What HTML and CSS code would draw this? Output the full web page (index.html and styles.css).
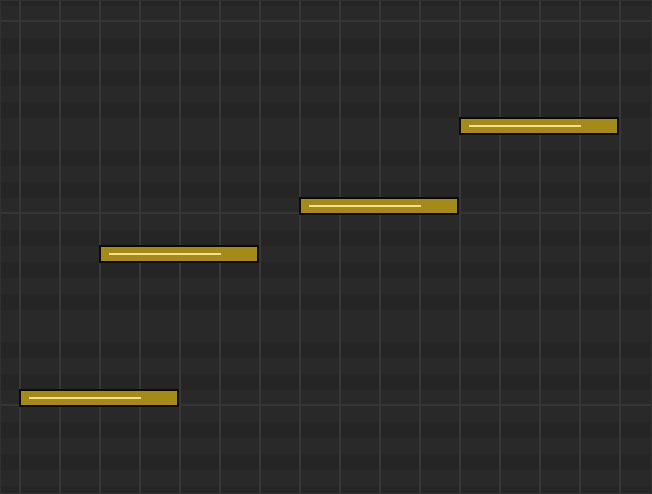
FILE: index.html
```html
<!DOCTYPE html>
<html lang="en">

<head>
    <meta charset="UTF-8">
    <meta name="viewport" content="width=device-width, initial-scale=1.0">
    <title>Piano Roll</title>
    <link rel="stylesheet" href="styles.css">
</head>

<body>
    <div class="roll">
        <div class="note" style="left: 18px; top: 388px;"><span class="velocity"></span></div>
        <div class="note" style="left: 98px; top: 244px;"><span class="velocity"></span></div>
        <div class="note" style="left: 298px; top: 196px;"><span class="velocity"></span></div>
        <div class="note" style="left: 458px; top: 116px;"><span class="velocity"></span></div>
    </div>
</body>

</html>
```

FILE: styles.css
```css
html,
body {
    margin: 0;
    padding: 0;
    background: #262626;
}

.roll {
    position: relative;
    width: 652px;
    height: 494px;
    box-sizing: border-box;
    border: 1px solid #313131;
    overflow: hidden;
    background-color: #282828;
    background-image:
        /* beat lines */
        linear-gradient(to right, #373737 0 2px, transparent 2px),
        /* octave line under each C row */
        linear-gradient(to bottom, transparent 190px, #363636 190px 192px),
        /* white / black key rows, B at top down to C */
        linear-gradient(to bottom,
            #292929 0 16px,
            #252525 16px 32px,
            #292929 32px 48px,
            #252525 48px 64px,
            #292929 64px 80px,
            #252525 80px 96px,
            #292929 96px 128px,
            #252525 128px 144px,
            #292929 144px 160px,
            #252525 160px 176px,
            #292929 176px 192px);
    background-size: 40px 100%, 100% 192px, 100% 192px;
    background-position: 18px 0, 0 21px, 0 21px;
}

.note {
    position: absolute;
    width: 160px;
    height: 18px;
    box-sizing: border-box;
    border: 2px solid #0c0b06;
    background: #a48a1b;
}

.velocity {
    position: absolute;
    left: 8px;
    top: 6px;
    width: 112px;
    height: 2px;
    background: #f4de8c;
}
```
